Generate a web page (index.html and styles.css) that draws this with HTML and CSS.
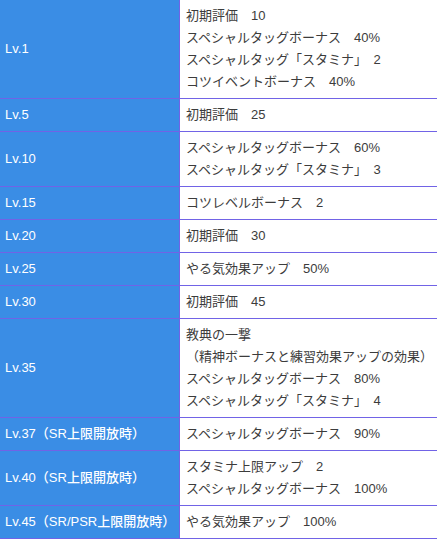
FILE: index.html
```html
<!DOCTYPE html>
<html lang="ja">
<head>
<meta charset="utf-8">
<link rel="stylesheet" href="styles.css">
</head>
<body>
<table class="lv-table">
  <colgroup><col class="col-lv"><col class="col-eff"></colgroup>
  <tbody>
    <tr><th>Lv.1</th><td>初期評価　10<br>スペシャルタッグボーナス　40%<br>スペシャルタッグ「スタミナ」　2<br>コツイベントボーナス　40%</td></tr>
    <tr><th>Lv.5</th><td>初期評価　25</td></tr>
    <tr><th>Lv.10</th><td>スペシャルタッグボーナス　60%<br>スペシャルタッグ「スタミナ」　3</td></tr>
    <tr><th>Lv.15</th><td>コツレベルボーナス　2</td></tr>
    <tr><th>Lv.20</th><td>初期評価　30</td></tr>
    <tr><th>Lv.25</th><td>やる気効果アップ　50%</td></tr>
    <tr><th>Lv.30</th><td>初期評価　45</td></tr>
    <tr><th>Lv.35</th><td>教典の一撃<br>（精神ボーナスと練習効果アップの効果）<br>スペシャルタッグボーナス　80%<br>スペシャルタッグ「スタミナ」　4</td></tr>
    <tr><th>Lv.37（SR上限開放時）</th><td>スペシャルタッグボーナス　90%</td></tr>
    <tr><th>Lv.40（SR上限開放時）</th><td>スタミナ上限アップ　2<br>スペシャルタッグボーナス　100%</td></tr>
    <tr><th>Lv.45（SR/PSR上限開放時）</th><td>やる気効果アップ　100%</td></tr>
  </tbody>
</table>
</body>
</html>
```
FILE: styles.css
```css
html, body {
  margin: 0;
  padding: 0;
  background: #ffffff;
}
body {
  font-family: "Liberation Sans", "Noto Sans CJK JP", sans-serif;
  font-size: 13px;
  color: #3a3a3a;
}
.lv-table {
  width: 437px;
  border-collapse: separate;
  border-spacing: 0;
  table-layout: fixed;
}
.col-lv { width: 180px; }
.lv-table th,
.lv-table td {
  box-sizing: border-box;
  padding: 5px 0 5px 6px;
  line-height: 22px;
  border-bottom: 1px solid #7163e6;
  vertical-align: middle;
  text-align: left;
  white-space: nowrap;
}
.lv-table th {
  background: #3a8de5;
  color: #ffffff;
  font-weight: 500;
  padding-left: 5px;
  border-right: 1px solid #7163e6;
}
.lv-table td {
  color: #3c3c3c;
}
```
